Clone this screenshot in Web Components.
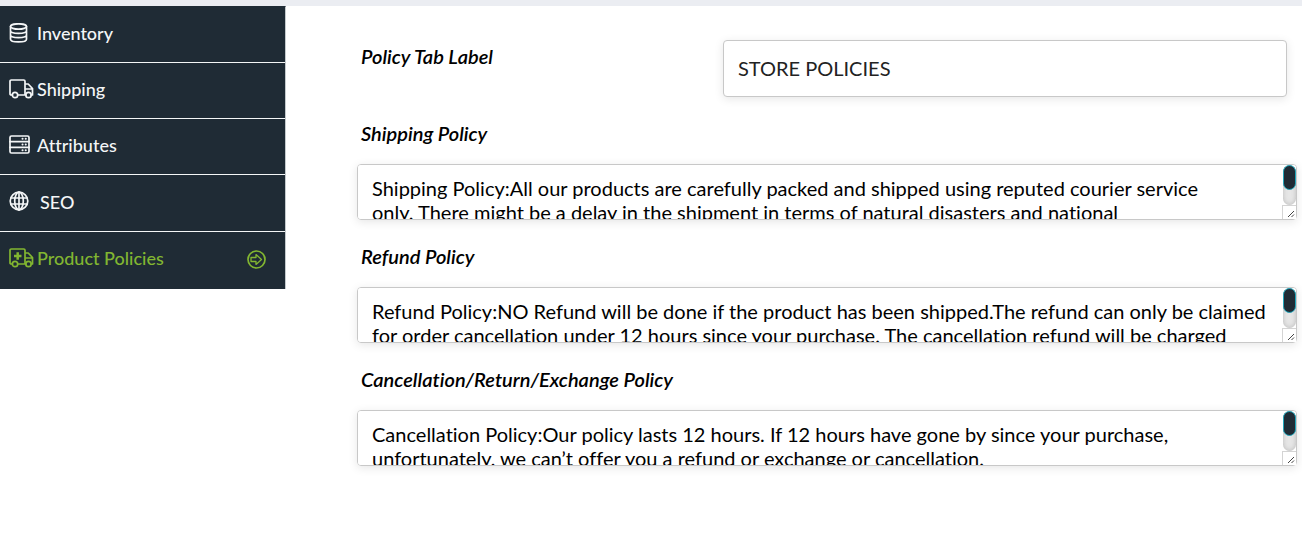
<!DOCTYPE html>
<html lang="en">
<head>
<meta charset="utf-8">
<title>Product Policies</title>
<style>
body { margin: 0; background: #fff; color: #000; font-family: Lato, "Liberation Sans", sans-serif; font-variant-ligatures: none; }
</style>
</head>
<body>
<policy-page></policy-page>
<script>
const define = (name, html) => {
  const template = document.createElement('template');
  template.innerHTML = html;
  customElements.define(name, class extends HTMLElement {
    constructor() {
      super();
      this.attachShadow({ mode: 'open' }).append(template.content.cloneNode(true));
    }
    connectedCallback() {
      const root = this.shadowRoot;
      const label = root.querySelector('label');
      if (label) label.textContent = this.getAttribute('label');
      const field = root.querySelector('input, textarea');
      if (field) field.value = this.getAttribute('value');
    }
  });
};

define('nav-item', `
<style>
:host { display: block; box-sizing: border-box; height: 56px; border-bottom: 1px solid #f4f6f7; }
:host([tall]) { height: 57px; }
:host([active]) { border-bottom: 0; color: #82b631; }
a { display: flex; align-items: center; height: 100%; box-sizing: border-box; padding: 0 19px 4px 9px; color: inherit; text-decoration: none; font-size: 18px; line-height: 24px; font-weight: 500; }
.icon { display: flex; width: 28px; }
:host([wide]) a { padding-bottom: 2px; }
:host([wide]) .icon { width: 31px; margin-bottom: 2px; }
:host([active]) a { padding-bottom: 6px; }
::slotted(svg) { fill: none; stroke: currentColor; stroke-width: 1.7; stroke-linejoin: round; stroke-linecap: round; }
.end { display: flex; margin-left: auto; padding-top: 4px; }
</style>
<a href="#"><span class="icon"><slot name="icon"></slot></span><span><slot></slot></span><span class="end"><slot name="end"></slot></span></a>`);

define('side-nav', `
<style>
:host { display: block; box-sizing: border-box; border-top: 1px solid #1f2b35; border-right: 1px solid #c4cacd; background: #1f2b35; color: #f4f6f7; }
</style>
<nav aria-label="Product settings"><slot></slot></nav>`);

define('text-field', `
<style>
:host { display: grid; grid-template-columns: 362px 1fr; align-items: start; padding: 0 10px 0 4px; }
label { font-size: 20px; line-height: 24px; font-weight: 600; font-style: italic; padding-top: 4px; }
input { box-sizing: border-box; width: 100%; height: 57px; padding: 0 14px 2px; border: 1px solid #c8c8c8; border-radius: 4px; box-shadow: 0 2px 10px rgba(0,0,0,.1); background: #fff; color: #222; font: 20px/24px Lato, sans-serif; font-variant-ligatures: none; }
</style>
<label for="field"></label><input id="field" type="text">`);

define('policy-field', `
<style>
:host { display: block; }
label { display: block; padding: 0 4px 19px; font-size: 20px; line-height: 24px; font-weight: 600; font-style: italic; }
.box { position: relative; margin-bottom: 24px; }
textarea { display: block; box-sizing: border-box; width: 100%; height: 56px; margin: 0; padding: 11px 28px 11px 14px; border: 1px solid #c8c8c8; border-radius: 4px; box-shadow: 0 2px 10px rgba(0,0,0,.1); background: #fff; color: #000; font: 20px/24px Lato, sans-serif; font-variant-ligatures: none; overflow-y: auto; scrollbar-width: none; resize: none; }
.scroll { position: absolute; top: 1px; right: 1px; bottom: 1px; width: 14px; display: flex; flex-direction: column; align-items: flex-end; pointer-events: none; }
.track { box-sizing: border-box; width: 13px; flex: 1; border-radius: 7px; background: #e6e6e6; box-shadow: inset 0 0 5px #bbb; }
.thumb { box-sizing: border-box; height: 25px; border: 1px solid #20a5ba; border-radius: 7px; background: #1f2b35; }
.grip { box-sizing: border-box; width: 14px; height: 14px; border-top: 1px solid #d4d4d4; border-left: 1px solid #d4d4d4; background: #fff; }
.grip svg { display: block; }
</style>
<label for="field"></label>
<div class="box"><textarea id="field"></textarea>
<div class="scroll" aria-hidden="true"><div class="track"><div class="thumb"></div></div><div class="grip"><svg width="13" height="13" viewBox="0 0 13 13" fill="none" stroke="#444" stroke-width="1"><path d="M5 11l6-6M8.500 11l2.500-2.500"/></svg></div></div></div>`);

define('policy-page', `
<style>
:host { display: block; }
.bar { height: 6px; background: #ebedf2; }
.layout { display: grid; grid-template-columns: 286px 1fr; align-items: start; column-gap: 71px; padding-right: 5px; }
main { padding-top: 34px; }
text-field { margin-bottom: 24px; }
</style>
<div class="bar"></div>
<div class="layout">
<side-nav>
  <nav-item><svg slot="icon" width="19" height="20" viewBox="0 0 19 20"><ellipse cx="9.500" cy="3.500" rx="8" ry="2.700"/><path d="M1.500 3.500v12.700c0 3.600 16 3.600 16 0V3.500M1.500 7.800c0 3.500 16 3.500 16 0M1.500 12c0 3.500 16 3.500 16 0"/></svg>Inventory</nav-item>
  <nav-item><svg slot="icon" width="25" height="20" viewBox="0 0 25 20"><path d="M3.500 16H2.300Q1 16 1 14.700V2.300Q1 1 2.300 1h12.400Q16 1 16 2.300V16H8.800M16 5h3.200l4.300 4.500V16h-1.300M16 10h7.500M16 16h1"/><circle cx="6" cy="16" r="2.700"/><circle cx="19.500" cy="16" r="2.700"/></svg>Shipping</nav-item>
  <nav-item><svg slot="icon" width="21" height="19" viewBox="0 0 21 19"><rect x="1" y="1" width="19" height="17" rx="1.500"/><path d="M1 6.700h19M1 12.300h19"/><path stroke-width="2" d="M13.500 3.800h.1M16.700 3.800h.1M13.500 9.500h.1M16.700 9.500h.1M13.500 15.200h.1M16.700 15.200h.1"/></svg>Attributes</nav-item>
  <nav-item tall wide><svg slot="icon" width="20" height="20" viewBox="0 0 20 20"><circle cx="10" cy="10" r="8.800"/><ellipse cx="10" cy="10" rx="4.300" ry="8.800"/><path d="M10 1v18M2 7h16M2 13h16"/></svg>SEO</nav-item>
  <nav-item tall active><svg slot="icon" width="25" height="20" viewBox="0 0 25 20"><path d="M3.500 16H2.300Q1 16 1 14.700V2.300Q1 1 2.300 1h12.400Q16 1 16 2.300V16H8.800M16 5h3.200l4.300 4.500V16h-1.300M16 10h7.500M16 16h1"/><circle cx="6" cy="16" r="2.700"/><circle cx="19.500" cy="16" r="2.700"/><path stroke-width="2.500" stroke-linecap="butt" d="M5 8h7.500M8.700 4.200v7.500"/></svg>Product Policies<svg slot="end" width="19" height="19" viewBox="0 0 19 19"><circle cx="9.500" cy="9.500" r="8.500"/><path stroke-width="1.300" d="M4 7.500h5V4.600l5.500 4.900L9 14.400v-2.900H4z"/></svg></nav-item>
</side-nav>
<main>
  <text-field label="Policy Tab Label" value="STORE POLICIES"></text-field>
  <policy-field label="Shipping Policy" value="Shipping Policy:All our products are carefully packed and shipped using reputed courier service&#10;only. There might be a delay in the shipment in terms of natural disasters and national"></policy-field>
  <policy-field label="Refund Policy" value="Refund Policy:NO Refund will be done if the product has been shipped.The refund can only be claimed for order cancellation under 12 hours since your purchase. The cancellation refund will be charged"></policy-field>
  <policy-field label="Cancellation/Return/Exchange Policy" value="Cancellation Policy:Our policy lasts 12 hours. If 12 hours have gone by since your purchase, unfortunately, we can’t offer you a refund or exchange or cancellation."></policy-field>
</main>
</div>`);
</script>
</body>
</html>
